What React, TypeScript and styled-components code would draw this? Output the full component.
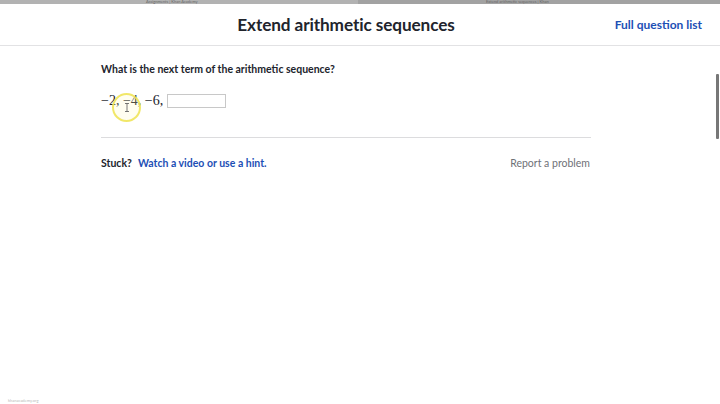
import React from "react";
import styled, { createGlobalStyle } from "styled-components";

const Global = createGlobalStyle`
  html, body { margin: 0; padding: 0; background: #ffffff; }
  body { font-family: Lato, "Open Sans", sans-serif; overflow: hidden; }
  * { box-sizing: border-box; }
`;

const Page = styled.div`
  width: 720px;
  height: 404px;
  display: flex;
  flex-direction: column;
  background: #fff;
  overflow: hidden;
`;

const TabStrip = styled.div`
  height: 4px;
  display: flex;
  flex: none;
`;

const Tab = styled.div<{ $shade: string; $w: number }>`
  width: ${(p) => p.$w}px;
  flex: ${(p) => (p.$w === 0 ? 1 : "none")};
  background: ${(p) => p.$shade};
  font-size: 4px;
  line-height: 3px;
  color: #666;
  overflow: hidden;
  padding-left: ${(p) => (p.$w ? 146 : 128)}px;
  white-space: nowrap;
`;

const Header = styled.header`
  height: 42px;
  flex: none;
  display: grid;
  align-items: center;
  border-bottom: 1px solid #e2e2e4;
  padding-right: 18px;
`;

const Title = styled.h1`
  grid-area: 1 / 1;
  justify-self: center;
  margin: 0 10px 0 0;
  font-family: Lato, sans-serif;
  font-weight: 700;
  font-size: 17.2px;
  color: #21242c;
  letter-spacing: -0.1px;
`;

const QuestionListLink = styled.a`
  grid-area: 1 / 1;
  justify-self: end;
  font-family: Lato, sans-serif;
  font-weight: 700;
  font-size: 12px;
  color: #1d4fb5;
  text-decoration: none;
`;

const Body = styled.div`
  flex: 1;
  display: flex;
  min-height: 0;
`;

const Main = styled.div`
  flex: 1;
  display: flex;
  flex-direction: column;
`;

const Content = styled.div`
  width: 490px;
  margin-left: 101px;
  display: flex;
  flex-direction: column;
`;

const Question = styled.p`
  margin: 17px 0 0 0;
  font-weight: 700;
  font-size: 10.5px;
  color: #21242c;
`;

const MathRow = styled.div`
  margin-top: 18px;
  display: flex;
  align-items: center;
  font-family: "Liberation Serif", "DejaVu Serif", serif;
  font-size: 14px;
  color: #21242c;
  height: 16px;
  position: relative;
`;

const AnswerBox = styled.span`
  display: inline-block;
  width: 59px;
  height: 14px;
  border: 1px solid #c8c8c8;
  margin-left: 4px;
  background: #fff;
`;

const Highlight = styled.div`
  position: absolute;
  left: 11px;
  top: 0px;
  width: 29px;
  height: 29px;
  border-radius: 50%;
  border: 2px solid rgba(240, 228, 90, 0.9);
  background: rgba(255, 250, 180, 0.2);
  display: flex;
  align-items: center;
  justify-content: center;
`;

const Divider = styled.hr`
  margin: 28px 0 0 0;
  border: none;
  border-top: 1px solid #dcdcde;
`;

const StuckRow = styled.div`
  margin-top: 19px;
  display: flex;
  align-items: center;
  font-size: 10.5px;
`;

const StuckLabel = styled.span`
  font-weight: 700;
  color: #21242c;
`;

const HintLink = styled.a`
  margin-left: 6px;
  font-weight: 700;
  color: #1d4fb5;
  text-decoration: none;
`;

const Report = styled.a`
  margin-left: auto;
  margin-right: 1px;
  color: #6f7177;
  text-decoration: none;
`;

const Gutter = styled.div`
  width: 28px;
  flex: none;
  display: flex;
  flex-direction: column;
  align-items: flex-end;
  padding-right: 1px;
`;

const Thumb = styled.div`
  margin-top: 28px;
  width: 3px;
  height: 65px;
  background: #777;
  border-radius: 1px;
`;

const Footer = styled.div`
  height: 6px;
  font-size: 4px;
  color: #bbb;
  padding-left: 8px;
  flex: none;
`;

function CursorBeam() {
  return (
    <svg width="6" height="9" viewBox="0 0 6 9">
      <path d="M1 0.5 H5 M3 0.5 V8.5 M1 8.5 H5" stroke="#555" strokeWidth="0.8" fill="none" />
    </svg>
  );
}

export default function App() {
  return (
    <Page>
      <Global />
      <TabStrip>
        <Tab $shade="#b2b2b2" $w={358}>Assignments | Khan Academy</Tab>
        <Tab $shade="#a2a2a2" $w={0}>Extend arithmetic sequences | Khan</Tab>
      </TabStrip>
      <Header>
        <Title>Extend arithmetic sequences</Title>
        <QuestionListLink href="#">Full question list</QuestionListLink>
      </Header>
      <Body>
        <Main>
          <Content>
            <Question>What is the next term of the arithmetic sequence?</Question>
            <MathRow>
              <span>−2,&nbsp;−4,&nbsp;−6,</span>
              <AnswerBox />
              <Highlight>
                <CursorBeam />
              </Highlight>
            </MathRow>
            <Divider />
            <StuckRow>
              <StuckLabel>Stuck?</StuckLabel>
              <HintLink href="#">Watch a video or use a hint.</HintLink>
              <Report href="#">Report a problem</Report>
            </StuckRow>
          </Content>
        </Main>
        <Gutter>
          <Thumb />
        </Gutter>
      </Body>
      <Footer>khanacademy.org</Footer>
    </Page>
  );
}
